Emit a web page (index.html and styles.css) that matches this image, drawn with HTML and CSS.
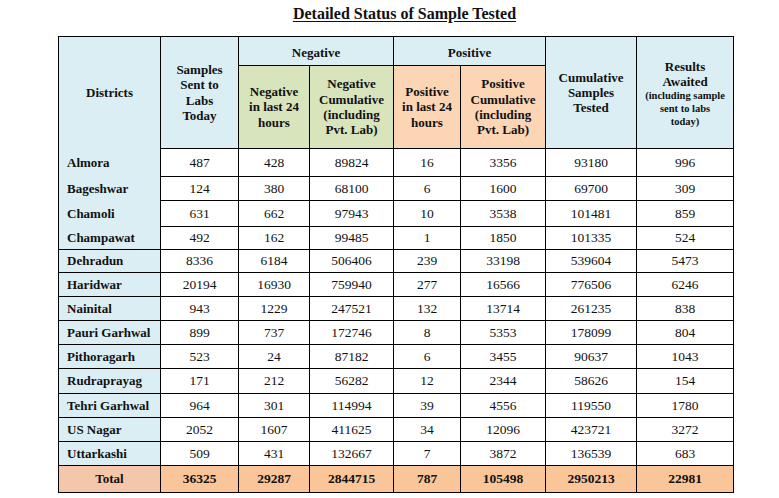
FILE: index.html
```html
<!DOCTYPE html>
<html>
<head>
<meta charset="utf-8">
<link rel="stylesheet" href="styles.css">
</head>
<body>
<div class="page">
  <h1 class="title">Detailed Status of Sample Tested</h1>
  <table class="status">
    <colgroup>
      <col class="c1"><col class="c2"><col class="c3"><col class="c4"><col class="c5"><col class="c6"><col class="c7"><col class="c8">
    </colgroup>
    <thead>
      <tr class="h-top">
        <th rowspan="2" class="blue dist-head">Districts</th>
        <th rowspan="2" class="blue">Samples<br>Sent to<br>Labs<br>Today</th>
        <th colspan="2" class="blue group">Negative</th>
        <th colspan="2" class="blue group">Positive</th>
        <th rowspan="2" class="blue">Cumulative<br>Samples<br>Tested</th>
        <th rowspan="2" class="blue awaited">Results<br>Awaited<span class="small">(including sample<br>sent to labs<br>today)</span></th>
      </tr>
      <tr class="h-sub">
        <th class="green">Negative<br>in last 24<br>hours</th>
        <th class="green">Negative<br>Cumulative<br>(including<br>Pvt. Lab)</th>
        <th class="orange">Positive<br>in last 24<br>hours</th>
        <th class="orange">Positive<br>Cumulative<br>(including<br>Pvt. Lab)</th>
      </tr>
    </thead>
    <tbody>
      <tr class="r28"><td class="dist nb-both">Almora</td><td>487</td><td>428</td><td>89824</td><td>16</td><td>3356</td><td>93180</td><td>996</td></tr>
      <tr class="r24"><td class="dist nb-both">Bageshwar</td><td>124</td><td>380</td><td>68100</td><td>6</td><td>1600</td><td>69700</td><td>309</td></tr>
      <tr class="r26"><td class="dist nb-both">Chamoli</td><td>631</td><td>662</td><td>97943</td><td>10</td><td>3538</td><td>101481</td><td>859</td></tr>
      <tr class="r23"><td class="dist nb-top">Champawat</td><td>492</td><td>162</td><td>99485</td><td>1</td><td>1850</td><td>101335</td><td>524</td></tr>
      <tr class="r23"><td class="dist">Dehradun</td><td>8336</td><td>6184</td><td>506406</td><td>239</td><td>33198</td><td>539604</td><td>5473</td></tr>
      <tr class="r24"><td class="dist">Haridwar</td><td>20194</td><td>16930</td><td>759940</td><td>277</td><td>16566</td><td>776506</td><td>6246</td></tr>
      <tr class="r24"><td class="dist">Nainital</td><td>943</td><td>1229</td><td>247521</td><td>132</td><td>13714</td><td>261235</td><td>838</td></tr>
      <tr class="r24"><td class="dist">Pauri Garhwal</td><td>899</td><td>737</td><td>172746</td><td>8</td><td>5353</td><td>178099</td><td>804</td></tr>
      <tr class="r24"><td class="dist">Pithoragarh</td><td>523</td><td>24</td><td>87182</td><td>6</td><td>3455</td><td>90637</td><td>1043</td></tr>
      <tr class="r25"><td class="dist">Rudraprayag</td><td>171</td><td>212</td><td>56282</td><td>12</td><td>2344</td><td>58626</td><td>154</td></tr>
      <tr class="r24"><td class="dist">Tehri Garhwal</td><td>964</td><td>301</td><td>114994</td><td>39</td><td>4556</td><td>119550</td><td>1780</td></tr>
      <tr class="r24"><td class="dist">US Nagar</td><td>2052</td><td>1607</td><td>411625</td><td>34</td><td>12096</td><td>423721</td><td>3272</td></tr>
      <tr class="r24"><td class="dist">Uttarkashi</td><td>509</td><td>431</td><td>132667</td><td>7</td><td>3872</td><td>136539</td><td>683</td></tr>
    </tbody>
    <tfoot>
      <tr class="total"><td class="total-label">Total</td><td>36325</td><td>29287</td><td>2844715</td><td>787</td><td>105498</td><td>2950213</td><td>22981</td></tr>
    </tfoot>
  </table>
</div>
</body>
</html>
```

FILE: styles.css
```css
html, body {
  margin: 0;
  padding: 0;
  background: #ffffff;
}

body {
  font-family: "Liberation Serif", "Times New Roman", serif;
  color: #111;
}

.page {
  padding: 5px 0 0 58px;
}

.title {
  box-sizing: border-box;
  width: 675px;
  margin: 0 0 13px 0;
  padding-left: 18px;
  font-size: 16px;
  line-height: 18px;
  font-weight: bold;
  text-align: center;
  text-decoration: underline;
  text-underline-offset: 2px;
}

.status {
  border-collapse: collapse;
  table-layout: fixed;
  width: 675px;
}

.c1 { width: 102px; }
.c2 { width: 78px; }
.c3 { width: 71px; }
.c4 { width: 84px; }
.c5 { width: 67px; }
.c6 { width: 85px; }
.c7 { width: 91px; }
.c8 { width: 97px; }

.status th,
.status td {
  border: 1px solid #000;
  padding: 0;
  text-align: center;
  vertical-align: middle;
}

.status th {
  font-size: 13px;
  line-height: 15.3px;
  font-weight: bold;
}

.status th.group {
  padding-top: 3px;
}

.status th.awaited {
  padding-top: 2px;
}

.status td {
  font-size: 13.5px;
  line-height: 16px;
}

.h-top { height: 29px; }
.h-sub { height: 83px; }

.blue { background: #dbeef4; }
.green { background: #d8e4bc; }
.orange { background: #fcd5b4; }

.small {
  display: block;
  margin-top: 1px;
  font-size: 10.5px;
  line-height: 12.7px;
}

.dist-head {
  border-bottom: none !important;
}

.status td.dist {
  background: #dbeef4;
  text-align: left;
  padding-left: 8px;
  font-weight: bold;
  font-size: 13px;
}

.status td.nb-both {
  border-top: none;
  border-bottom: none;
}

.status td.nb-top {
  border-top: none;
}

.r23 { height: 23px; }
.r24 { height: 24px; }
.r25 { height: 25px; }
.r26 { height: 26px; }
.r28 { height: 28px; }

.total { height: 27px; }

.total td {
  background: #f9c599;
  font-weight: bold;
}

.status td.total-label {
  background: #f4c7ab;
  font-size: 13px;
}
```
